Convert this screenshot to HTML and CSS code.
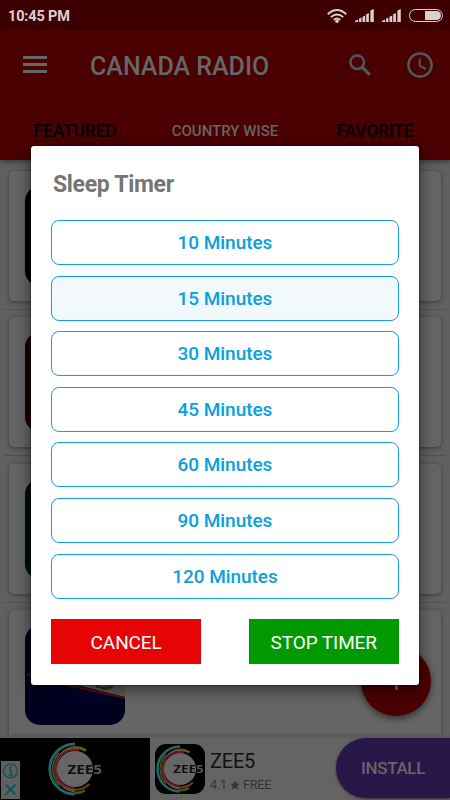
FILE: index.html
```html
<!DOCTYPE html>
<html lang="en">
<head>
<meta charset="utf-8">
<title>Canada Radio</title>
<link rel="stylesheet" href="styles.css">
</head>
<body>
<div class="screen">
  <header class="status">
    <span class="clock">10:45 PM</span>
    <svg class="wifi" viewBox="0 0 20 14"><g fill="none" stroke="currentColor" stroke-width="1.9"><path d="M.8 5.2Q10-3 19.2 5.2M3.8 8.1Q10 2.7 16.2 8.1M6.8 10.9Q10 8.2 13.2 10.9"/></g><circle cx="10" cy="12.2" r="1.7" fill="currentColor"/></svg>
    <svg class="signal" viewBox="0 0 19 13"><path d="M0 13v-1l3-1.6V13zM4 9.7l2.4-1.2V13H4zM7.5 7.8l2.7-1.3V13H7.5zM11.2 5.2L13.9 4v9h-2.7zM15.4 1.6L18.8 0v13h-3.4z" fill="currentColor"/></svg>
    <svg class="signal" viewBox="0 0 19 13"><path d="M0 13v-1l3-1.6V13zM4 9.7l2.4-1.2V13H4zM7.5 7.8l2.7-1.3V13H7.5zM11.2 5.2L13.9 4v9h-2.7zM15.4 1.6L18.8 0v13h-3.4z" fill="currentColor"/></svg>
    <span class="battery"><i></i></span>
  </header>
  <div class="appbar">
    <div class="toolbar">
      <div class="menu"><i></i><i></i><i></i></div>
      <h1>CANADA RADIO</h1>
      <svg class="search" viewBox="0 0 22 22"><circle cx="8.2" cy="8.2" r="6.8" fill="none" stroke="currentColor" stroke-width="2.5"/><path d="M13 13l8 8" stroke="currentColor" stroke-width="3.2"/></svg>
      <svg class="timer" viewBox="0 0 26 26"><circle cx="13" cy="13" r="11.6" fill="none" stroke="currentColor" stroke-width="2.5"/><path d="M12.7 6.5v7.2l6 3.5" fill="none" stroke="currentColor" stroke-width="2"/></svg>
    </div>
    <nav class="tabs"><span>FEATURED</span><span class="active">COUNTRY WISE</span><span>FAVORITE</span></nav>
  </div>
  <main class="list">
    <article class="card"><div class="thumb black"></div></article>
    <hr>
    <article class="card"><div class="thumb maroon"></div></article>
    <hr>
    <article class="card"><div class="thumb green"></div></article>
    <hr>
    <article class="card"><div class="thumb navy">
      <svg viewBox="0 0 100 100"><path d="M12 50L100 20V72L44 58z" fill="#5c5c5c"/><path d="M2 49.5h4M36 58.5L100 73" stroke="#5b0b15" stroke-width="2.2"/><path d="M71 60l8 2 10-2-3 4-7 1-5-2-3 0z" fill="#3c2f12"/></svg>
    </div></article>
  </main>
  <footer class="ad">
    <div class="banner">
      <svg class="zee-large" viewBox="0 0 56 56">
        <circle cx="28" cy="28" r="18" fill="#666"/>
        <g fill="none">
          <path d="M28 2.8A25.2 25.2 0 0 0 28 53.2" stroke="#24676a" stroke-width="2.8"/>
          <path d="M39 9.5A21.8 21.8 0 0 0 28 6.4A21.8 21.8 0 0 0 28 49.8" stroke="#6c5515" stroke-width="2.8"/>
          <path d="M12 12A23.3 23.3 0 0 0 12 44" stroke="#5a6a18" stroke-width="1.2"/>
          <path d="M32 9.4A19.2 19.2 0 1 0 27 47.2" stroke="#691944" stroke-width="2.2"/>
          <path d="M27 48.5A20 20 0 0 0 42.5 43" stroke="#703619" stroke-width="2.4"/>
          <path d="M27 52A24 24 0 0 0 38 49.6" stroke="#3e5a16" stroke-width="2.4"/>
        </g>
        <text x="20.5" y="32.5" class="zee-text" textLength="34.5" lengthAdjust="spacingAndGlyphs"><tspan>ZEE</tspan><tspan class="five">5</tspan></text>
      </svg>
      <div class="adchoices">
        <svg viewBox="0 0 19 38"><g fill="none" stroke="#17515b"><circle cx="9.5" cy="9.8" r="6.9" stroke-width="1.4"/><path d="M8 8.5h1.8V14M7.5 14h4.4" stroke-width="1.7"/><path d="M4.5 23.5l10 10M14.5 23.5l-10 10" stroke-width="1.8"/></g><circle cx="9.5" cy="5.9" r="1.2" fill="#17515b"/></svg>
      </div>
    </div>
    <div class="app-icon">
      <svg viewBox="0 0 56 56">
        <circle cx="28" cy="28" r="18" fill="#666"/>
        <g fill="none">
          <path d="M28 2.8A25.2 25.2 0 0 0 28 53.2" stroke="#24676a" stroke-width="2.8"/>
          <path d="M39 9.5A21.8 21.8 0 0 0 28 6.4A21.8 21.8 0 0 0 28 49.8" stroke="#6c5515" stroke-width="2.8"/>
          <path d="M12 12A23.3 23.3 0 0 0 12 44" stroke="#5a6a18" stroke-width="1.2"/>
          <path d="M32 9.4A19.2 19.2 0 1 0 27 47.2" stroke="#691944" stroke-width="2.2"/>
          <path d="M27 48.5A20 20 0 0 0 42.5 43" stroke="#703619" stroke-width="2.4"/>
          <path d="M27 52A24 24 0 0 0 38 49.6" stroke="#3e5a16" stroke-width="2.4"/>
        </g>
        <text x="20.5" y="32.5" class="zee-text" textLength="34" lengthAdjust="spacingAndGlyphs"><tspan>ZEE</tspan><tspan class="five">5</tspan></text>
      </svg>
    </div>
    <div class="app-info">
      <div class="app-name">ZEE5</div>
      <div class="rating"><span>4.1</span><svg viewBox="0 0 10 10"><path d="M5 0l1.4 3.5 3.6.3-2.8 2.3.9 3.6L5 7.8 1.9 9.7l.9-3.6L0 3.8l3.6-.3z" fill="currentColor"/></svg><span>FREE</span></div>
    </div>
    <div class="install"><span>INSTALL</span></div>
  </footer>
  <div class="fab"><i></i></div>
  <section class="dialog">
    <h2>Sleep Timer</h2>
    <div class="options">
      <button>10 Minutes</button>
      <button class="selected">15 Minutes</button>
      <button>30 Minutes</button>
      <button>45 Minutes</button>
      <button>60 Minutes</button>
      <button>90 Minutes</button>
      <button>120 Minutes</button>
    </div>
    <div class="actions"><button class="cancel">CANCEL</button><button class="stop">STOP TIMER</button></div>
  </section>
</div>
</body>
</html>
```

FILE: styles.css
```css
* { box-sizing: border-box; }
body { margin: 0; font-family: Roboto, "Liberation Sans", sans-serif; }
svg { display: block; flex: none; }
button { font-family: inherit; padding: 0; margin: 0; }
.screen { position: relative; width: 450px; height: 800px; overflow: hidden; display: flex; flex-direction: column; background: #606060; }

.status { flex: none; height: 30px; background: #3c0000; color: #dccfcf; display: flex; align-items: center; padding: 1px 7px 0 8px; }
.clock { font-size: 14.5px; font-weight: 700; letter-spacing: -.15px; margin: 1px auto 0 0; }
.wifi { width: 20px; height: 14px; margin-right: 8px; }
.signal { width: 19px; height: 13px; margin: 0 8px 0 0; }
.battery { width: 34px; height: 13px; border: 1.5px solid #dccfcf; border-radius: 7px; padding: 1px; display: flex; justify-content: flex-end; }
.battery i { width: 16px; background: #dccfcf; border-radius: 0 5px 5px 0; }

.appbar { position: relative; z-index: 1; flex: none; height: 130px; background: #4a0000; box-shadow: 0 2px 5px rgba(0, 0, 0, .4); display: flex; flex-direction: column; }
.toolbar { height: 72px; display: flex; align-items: center; padding: 0 17px 0 23px; }
.menu { width: 24px; height: 17px; display: flex; flex-direction: column; justify-content: space-between; margin-right: 43px; margin-top: -3px; }
.menu i { height: 3px; background: #666; }
h1 { margin: 2px auto 0 0; font-size: 25px; font-weight: 500; color: #666; line-height: 30px; white-space: nowrap; }
.search { width: 22px; height: 22px; color: #4d575d; margin: -3px 36px 0 0; }
.timer { width: 26px; height: 26px; color: #4d575d; margin-top: -2px; }
.tabs { display: grid; grid-template-columns: repeat(3, 1fr); height: 58px; align-items: center; text-align: center; font-size: 17.5px; font-weight: 500; letter-spacing: -.2px; color: #000; }
.tabs .active { font-size: 15px; letter-spacing: 0; color: #666; }

.list { flex: 1; min-height: 0; overflow: hidden; padding: 11px 4px 0; }
.card { height: 130px; margin: 0 5px; padding: 15px 15.5px; border-radius: 5px; background: #656565; box-shadow: 0 1px 4px rgba(0, 0, 0, .4); }
.card:last-child { height: 150px; }
hr { border: 0; height: 1px; margin: 8px 0 7.3px; background: #515151; }
.thumb { width: 100px; height: 100px; border-radius: 15px; overflow: hidden; }
.black { background: #000; }
.maroon { background: #210000; }
.green { background: #001009; }
.navy { background: radial-gradient(#00002e, #000018); }

.ad { position: relative; flex: none; height: 66px; border-top: 4px solid #5c5c5c; background: #646464; display: flex; align-items: center; }
.banner { position: relative; width: 150px; height: 62px; background: #000; padding: 3px 0 0 47px; }
.zee-large { width: 56px; height: 56px; }
.adchoices { position: absolute; left: 1px; bottom: 1px; width: 19px; height: 38px; background: #5f6060; }
.app-icon { width: 50px; height: 50px; margin: 0 5px; border-radius: 11px; background: #000; overflow: hidden; }
.app-icon svg { width: 50px; height: 50px; }
.zee-text { font-family: "Open Sans", sans-serif; font-size: 12px; font-weight: 700; fill: #111; }
.zee-text .five { fill: #555; }
.app-info { width: 126px; }
.app-name { font-size: 20px; line-height: 24px; color: #111; letter-spacing: -.2px; margin-top: 6px; }
.rating { display: flex; align-items: center; font-size: 12.5px; line-height: 20px; color: #333; margin-top: 2px; letter-spacing: -.15px; }
.rating svg { width: 10px; height: 10px; margin: 0 3px; }
.install { width: 114px; height: 60px; border-radius: 30px 0 0 30px; background: #2a1749; color: #666; display: flex; align-items: center; justify-content: center; font-size: 17px; font-weight: 500; letter-spacing: -.35px; margin-top: -3px; box-shadow: 0 1px 3px rgba(0, 0, 0, .5); }

.fab { position: absolute; left: 361px; top: 646px; width: 70px; height: 70px; border-radius: 50%; background: #4a0000; box-shadow: 0 3px 6px rgba(0, 0, 0, .5); display: flex; align-items: center; justify-content: center; }
.fab i { width: 3px; height: 18px; background: #666; }

.dialog { position: absolute; z-index: 2; left: 31px; top: 145.5px; width: 388px; height: 539px; border-radius: 3px; background: #fff; padding: 24px 20.5px 0 20.4px; box-shadow: 0 4px 16px rgba(0, 0, 0, .55), 0 0 2px rgba(0, 0, 0, .7); }
h2 { margin: 0 0 21.5px 1.5px; font-size: 23px; line-height: 29px; font-weight: 700; letter-spacing: -.3px; color: #757575; }
.options { display: flex; flex-direction: column; gap: 10.6px; }
.options button { height: 45px; border: 1px solid #149fdc; border-radius: 8px; background: #fff; color: #0aa0dd; font-size: 19px; font-weight: 500; letter-spacing: -.05px; }
.options .selected { background: #f1f9fd; }
.actions { display: flex; justify-content: space-between; margin-top: 20px; }
.actions button { width: 149.5px; height: 45px; border: 0; color: #fff; font-size: 19px; letter-spacing: -.1px; padding-top: 2px; }
.actions .cancel { background: #e60404; }
.actions .stop { background: #009a00; }
```
